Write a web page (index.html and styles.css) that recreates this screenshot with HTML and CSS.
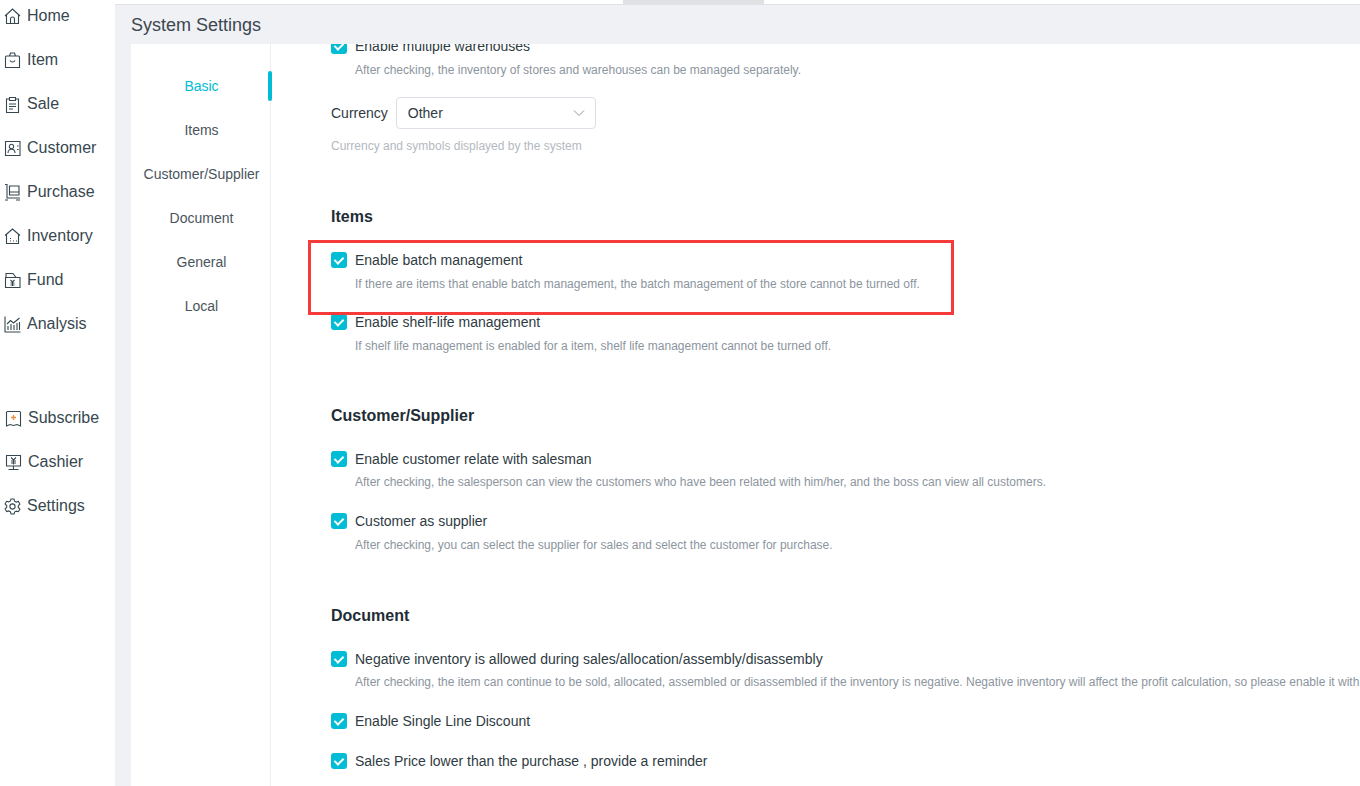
FILE: index.html
```html
<!DOCTYPE html>
<html lang="en">
<head>
    <meta charset="UTF-8">
    <meta name="viewport" content="width=device-width, initial-scale=1.0">
    <title>System Settings</title>
    <link rel="stylesheet" href="styles.css">
</head>
<body>
    <aside class="sidebar">
        <ul class="side-menu">
            <li><svg class="icon" viewBox="0 0 17 17"><path d="M1 8 8.500 1 16 8M2.500 6.500v9h12v-9M6.500 15.500v-4.500a2 2 0 0 1 4 0v4.500"/></svg>Home</li>
            <li><svg class="icon" viewBox="0 0 17 17"><path d="M2.500 4h12a1 1 0 0 1 1 1v10.500h-14V5a1 1 0 0 1 1-1zM5.500 4l1-3h4l1 3M6 8.500c1 2 4 2 5 0"/></svg>Item</li>
            <li><svg class="icon" viewBox="0 0 17 17"><path d="M5.500 3H2.500v13.500h12V3h-3M5.500 1.500h6v3h-6zM5 8h7M5 10.500h7M5 13h4"/></svg>Sale</li>
            <li><svg class="icon" viewBox="0 0 17 17"><path d="M1.500 1.500h14.500v14h-14.500zM4 13c0-5 7-5 7 0M5.300 6.500a2.200 2.200 0 1 0 4.400 0 2.200 2.200 0 1 0-4.400 0M13 6h1.500M13 9.500h1.500"/></svg>Customer</li>
            <li><svg class="icon" viewBox="0 0 17 17"><path d="M1 .5h2v13.500h13M5.500 2h9.500v9h-9.500zM5.500 8h9.500M1 16h3M12 16h4"/></svg>Purchase</li>
            <li><svg class="icon" viewBox="0 0 17 17"><path d="M1 7.500 8.500 1 16 7.500M2.500 6.500v9h12v-9M6 10.500h1M6 13h1M9 13h1M12 13h1"/></svg>Inventory</li>
            <li><svg class="icon" viewBox="0 0 17 17"><path d="M1.500 5.500h14.500v10h-14.500zM2 5V1.500h7l3 4M6.500 8l2 2 2-2M8.500 10v4M6.500 11h4M6.500 13h4"/></svg>Fund</li>
            <li><svg class="icon" viewBox="0 0 17 17"><path d="M1 .5v15.500h15.500M3 8l3.500-3.500 3 2.500L15.500 2M4 14v-4M7 14V8M10 14V9M13 14V7M15.500 14V6"/></svg>Analysis</li>
            <li class="menu-gap shift"><svg class="icon" viewBox="0 0 17 17"><path d="M2.500 1.500h12a1 1 0 0 1 1 1v13.500l-3.500-1.500-3.500 1-3.500-1-3.500 1.500V2.500a1 1 0 0 1 1-1z"/><path class="plus" d="M6 7.500h5M8.500 5v5"/></svg>Subscribe</li>
            <li class="shift"><svg class="icon" viewBox="0 0 17 17"><path d="M1.500 1.500h14v10.500h-14zM8.500 12v3.500M3.500 15.500h10M6 3.500l2.500 2.500 2.500-2.500M8.500 6v4.500M6 7h5M6 9h5"/></svg>Cashier</li>
            <li><svg class="icon" viewBox="0 0 17 17"><path d="M7 1h3l.6 2.200 1.600.9 2.200-.6 1.500 2.600-1.600 1.600v1.800l1.600 1.600-1.500 2.600-2.200-.6-1.600.9L10 16H7l-.6-2.200-1.600-.9-2.200.6-1.500-2.600 1.600-1.600V7.500L1.100 5.900l1.500-2.600 2.200.6 1.600-.9z"/><circle cx="8.500" cy="8.500" r="2.600"/></svg>Settings</li>
        </ul>
    </aside>

    <main class="main">
        <div class="top-strip"><span class="top-tab"></span></div>
        <h1 class="page-title">System Settings</h1>

        <div class="panel">
            <ul class="section-nav">
                <li class="active">Basic</li>
                <li>Items</li>
                <li>Customer/Supplier</li>
                <li>Document</li>
                <li>General</li>
                <li>Local</li>
            </ul>

            <div class="settings">
                <div class="settings-scroll">
                    <div class="setting">
                        <label class="check"><span class="box"></span>Enable multiple warehouses</label>
                        <p class="hint">After checking, the inventory of stores and warehouses can be managed separately.</p>
                    </div>

                    <div class="currency-row">
                        <span>Currency</span>
                        <div class="select">Other
                            <svg class="chevron" viewBox="0 0 12 8"><path d="M1 1.500 6 6.500 11 1.500"/></svg>
                        </div>
                    </div>
                    <p class="hint-plain">Currency and symbols displayed by the system</p>

                    <h2 class="items-title">Items</h2>
                    <div class="setting">
                        <label class="check"><span class="box"></span>Enable batch management</label>
                        <p class="hint">If there are items that enable batch management, the batch management of the store cannot be turned off.</p>
                    </div>
                    <div class="setting">
                        <label class="check"><span class="box"></span>Enable shelf-life management</label>
                        <p class="hint">If shelf life management is enabled for a item, shelf life management cannot be turned off.</p>
                    </div>

                    <h2>Customer/Supplier</h2>
                    <div class="setting">
                        <label class="check"><span class="box"></span>Enable customer relate with salesman</label>
                        <p class="hint hint-close">After checking, the salesperson can view the customers who have been related with him/her, and the boss can view all customers.</p>
                    </div>
                    <div class="setting">
                        <label class="check"><span class="box"></span>Customer as supplier</label>
                        <p class="hint">After checking, you can select the supplier for sales and select the customer for purchase.</p>
                    </div>

                    <h2 class="document-title">Document</h2>
                    <div class="setting">
                        <label class="check"><span class="box"></span>Negative inventory is allowed during sales/allocation/assembly/disassembly</label>
                        <p class="hint hint-close">After checking, the item can continue to be sold, allocated, assembled or disassembled if the inventory is negative. Negative inventory will affect the profit calculation, so please enable it with caution.</p>
                    </div>
                    <div class="setting">
                        <label class="check"><span class="box"></span>Enable Single Line Discount</label>
                    </div>
                    <div class="setting">
                        <label class="check"><span class="box"></span>Sales Price lower than the purchase , provide a reminder</label>
                    </div>
                </div>
                <div class="highlight"></div>
            </div>
        </div>
    </main>
</body>
</html>
```

FILE: styles.css
```css
* {
    box-sizing: border-box;
}

html, body {
    height: 100%;
}

body {
    display: flex;
    margin: 0;
    overflow: hidden;
    background-color: #f0f1f5;
    color: #2f3b43;
    font-family: "Liberation Sans", Arial, sans-serif;
    font-size: 14px;
}

.sidebar {
    flex: 0 0 115px;
    background: #fff;
}

.side-menu {
    list-style: none;
    margin: 0;
    padding: 0;
    font-size: 16px;
    color: #37474f;
}

.side-menu li {
    display: flex;
    align-items: center;
    gap: 6px;
    height: 44px;
    margin-top: -6px;
    margin-bottom: 6px;
    padding-left: 4px;
}

.side-menu .shift {
    padding-left: 5px;
}

.side-menu .menu-gap {
    margin-top: 50px;
}

.icon {
    flex: none;
    width: 17px;
    height: 17px;
    fill: none;
    stroke: #37474f;
    stroke-width: 1.1;
}

.icon .plus {
    stroke: #f08a3c;
    stroke-width: 1.3;
}

.main {
    flex: 1;
    min-width: 0;
    display: flex;
    flex-direction: column;
}

.top-strip {
    flex: none;
    height: 5px;
    padding-left: 508px;
    background: #fff;
    border-bottom: 1px solid #dfe1e6;
}

.top-tab {
    display: block;
    width: 141px;
    height: 4px;
    background: #e0e1e3;
}

.page-title {
    flex: none;
    height: 39px;
    margin: 0;
    padding-left: 16px;
    font-size: 18px;
    font-weight: normal;
    line-height: 40px;
    color: #3c4650;
}

.panel {
    flex: 1;
    min-height: 0;
    display: flex;
    margin-left: 16px;
    background: #fff;
}

.section-nav {
    flex: 0 0 140px;
    list-style: none;
    margin: 0;
    padding: 20px 0 0 2px;
    border-right: 1px solid #eceef1;
    color: #4a545c;
}

.section-nav li {
    position: relative;
    height: 44px;
    line-height: 44px;
    text-align: center;
}

.section-nav .active {
    color: #00bcd4;
}

.section-nav .active::after {
    content: "";
    position: absolute;
    top: 7px;
    right: -2px;
    width: 4px;
    height: 30px;
    border-radius: 2px;
    background: #00bcd4;
}

.settings {
    position: relative;
    flex: 1;
    min-width: 0;
    overflow: hidden;
}

.settings-scroll {
    margin-top: -8px;
    padding-left: 60px;
    white-space: nowrap;
}

.setting {
    margin-bottom: 20px;
}

.check {
    display: flex;
    align-items: center;
    gap: 8px;
    height: 20px;
    line-height: 20px;
}

.box {
    position: relative;
    flex: none;
    width: 16px;
    height: 16px;
    border-radius: 3px;
    background: #00bcd4;
}

.box::after {
    content: "";
    position: absolute;
    top: 3px;
    left: 5px;
    width: 4px;
    height: 7px;
    border: solid #fff;
    border-width: 0 2px 2px 0;
    transform: rotate(45deg);
}

.hint, .hint-plain {
    margin: 6px 0 0 24px;
    font-size: 12px;
    line-height: 16px;
    color: #8c959e;
}

.hint-close {
    margin-top: 5px;
    padding-bottom: 1px;
}

.hint-plain {
    margin: 9px 0 0;
    color: #b3b9bf;
}

.currency-row {
    display: flex;
    align-items: center;
    gap: 8px;
    margin-top: -1px;
}

.select {
    position: relative;
    width: 200px;
    height: 32px;
    padding-left: 11px;
    border: 1px solid #dcdfe6;
    border-radius: 4px;
    line-height: 30px;
}

.chevron {
    position: absolute;
    top: 11px;
    right: 10px;
    width: 12px;
    height: 8px;
    fill: none;
    stroke: #8c959e;
}

h2 {
    height: 24px;
    margin: 50px 0 21px;
    font-size: 16px;
    line-height: 24px;
    color: #1f2d35;
}

.items-title {
    margin-top: 51px;
}

.document-title {
    margin-top: 51px;
}

.highlight {
    position: absolute;
    top: 196px;
    left: 37px;
    width: 646px;
    height: 75px;
    border: 3px solid #f73a3a;
}
```
